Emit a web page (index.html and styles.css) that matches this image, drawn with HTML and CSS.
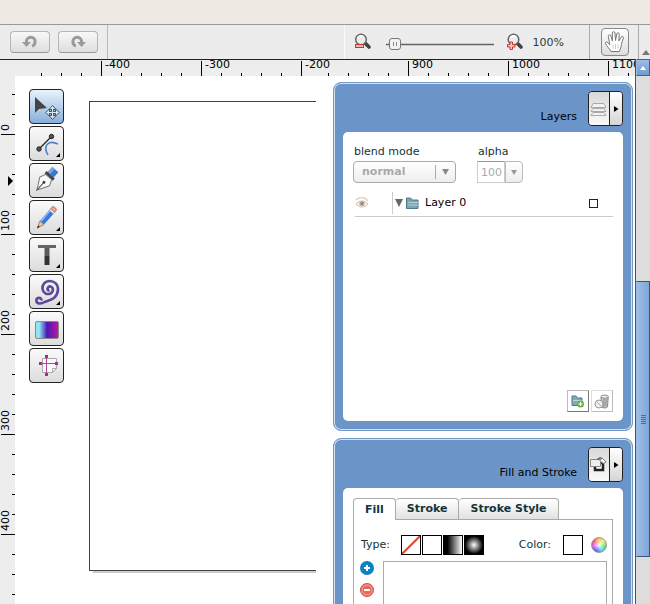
FILE: index.html
```html
<!DOCTYPE html>
<html lang="en">
<head>
<meta charset="utf-8">
<title>Vector editor</title>
<link rel="stylesheet" href="styles.css">
</head>
<body>
<div class="menubar"></div>
<header class="toolbar">
  <div class="history">
    <button class="history-btn" aria-label="Undo"><svg width="16" height="14" viewBox="0 0 16 14"><path d="M4.500 8V6.500a4.300 4.300 0 0 1 8.600 0c0 2.300-1 3.800-3 4.700" fill="none" stroke="#999" stroke-width="3"/><path d="M0 7h9l-4.500 5z" fill="#999"/></svg></button>
    <button class="history-btn" aria-label="Redo"><svg width="16" height="14" viewBox="0 0 16 14"><path d="M11.500 8V6.500a4.300 4.300 0 0 0-8.600 0c0 2.300 1 3.800 3 4.700" fill="none" stroke="#999" stroke-width="3"/><path d="M16 7H7l4.500 5z" fill="#999"/></svg></button>
  </div>
  <div class="zoom">
    <button class="plain" aria-label="Zoom out"><svg width="18" height="18" viewBox="0 0 18 18"><path d="M10 9l5 5" stroke="#444" stroke-width="3.600" stroke-linecap="round"/><circle cx="7" cy="6.500" r="5.300" fill="#e9edef" stroke="#666" stroke-width="1.500"/><path d="M4 5c1-2 4-3 5-1" fill="none" stroke="#fff" stroke-width="2"/><rect x="1.500" y="11.500" width="8" height="3" fill="#f6b5ac" stroke="#c8372d"/></svg></button>
    <input class="slider" type="range" min="0" max="100" value="4" aria-label="Zoom">
    <button class="plain" aria-label="Zoom in"><svg width="18" height="18" viewBox="0 0 18 18"><path d="M10 9l5 5" stroke="#444" stroke-width="3.600" stroke-linecap="round"/><circle cx="7.500" cy="6.500" r="5.300" fill="#e9edef" stroke="#666" stroke-width="1.500"/><path d="M4.500 5c1-2 4-3 5-1" fill="none" stroke="#fff" stroke-width="2"/><path d="M4 9h2.500v2.500H9V14H6.500v2.500H4V14H1.500v-2.500H4z" fill="#f6c3bb" stroke="#c8372d"/></svg></button>
    <span class="zoom-value">100%</span>
  </div>
  <div class="hand-group">
    <button class="hand" aria-label="Hand"><svg width="22" height="24" viewBox="0 0 22 24"><path d="M7 21.500c-1.500-3-4.500-5.500-5.500-8-.4-1.500 1.400-2 2.300-1l2 2.200L4.300 6.500c-.3-1.900 2-2.300 2.600-.5l1.500 5L8.300 3c0-1.800 2.500-1.800 2.700 0l.5 7.500 1.300-6.700c.4-1.600 2.500-1.300 2.400.4L14.800 11l2.400-4c.9-1.300 2.700-.4 2.200 1.200-.8 2.600-1.800 4-2 6.300-.2 2.700-1 4.500-2.200 7z" fill="#fff" stroke="#777"/><path d="M9 14.500v4M11.500 14v5M14 14.500v4" stroke="#ccc"/></svg></button>
  </div>
  <div class="toolbar-end"><svg width="8" height="5" viewBox="0 0 8 5"><path d="M4 0l4 5H0z" fill="#777"/></svg></div>
</header>

<div class="app">
  <div class="desk">
    <div class="ruler-top">
      <span class="cell lead"></span>
      <span class="cell major">-400</span>
      <span class="cell major">-300</span>
      <span class="cell major short">-200</span>
      <span class="cell medium"></span>
      <span class="cell major">900</span>
      <span class="cell major">1000</span>
      <span class="cell major">1100</span>
    </div>
    <main class="workspace">
      <div class="ruler-left">
        <span class="vcell vlead"><b>0</b></span>
        <span class="vcell vmajor"><svg class="marker" width="6" height="10" viewBox="0 0 6 10"><path d="M1 0l5 5-5 5z"/></svg><b>100</b></span>
        <span class="vcell vmajor"><b>200</b></span>
        <span class="vcell vmajor"><b>300</b></span>
        <span class="vcell vmajor"><b>400</b></span>
        <span class="vcell vmajor vlast"></span>
      </div>
      <nav class="tools" aria-label="Tools">
        <button class="tool active" aria-label="Select"><svg width="33" height="33" viewBox="0 0 33 33"><path d="M5 7v16l4-4 8-1z" fill="#444"/><path d="M22.500 17v12M16.500 22.500h12" stroke="#555" stroke-width="3"/><path d="M22.500 15.500l3.500 4h-7zM22.500 29.500l3.500-4h-7zM15.500 22.500l4-3.500v7zM29.500 22.500l-4-3.500v7z" fill="#dbe8f5" stroke="#555"/><path d="M22.500 18v9M18 22.500h9" stroke="#dbe8f5"/></svg></button>
        <button class="tool more" aria-label="Edit points"><svg width="33" height="33" viewBox="0 0 33 33"><path d="M18 28c-5-8-1-16 10-11" fill="none" stroke="#4b82cf" stroke-width="1.600"/><path d="M9 22L22 9" stroke="#222" stroke-width="1.300"/><circle cx="9" cy="22" r="2.200" fill="#555" stroke="#222"/><circle cx="21.500" cy="9.500" r="2.200" fill="#555" stroke="#222"/></svg></button>
        <button class="tool" aria-label="Pen"><svg width="33" height="33" viewBox="0 0 33 33"><g transform="rotate(42 16 16)"><path d="M12 2h8v7h-8z" fill="#3d78cf"/><path d="M12 2h3v7h-3z" fill="#7ba7e5"/><path d="M10.500 9h11v3h-11z" fill="#3b4654"/><path d="M12 12h8l2.500 6c-2 4-4.500 7-6.500 12-2-5-4.500-8-6.500-12z" fill="#fafaf8" stroke="#777"/><path d="M16 29v-10" stroke="#444"/><circle cx="16" cy="19" r="1.400" fill="#333"/></g></svg></button>
        <button class="tool more" aria-label="Pencil"><svg width="33" height="33" viewBox="0 0 33 33"><g transform="rotate(41 16 16)"><rect x="14" y="3" width="5.500" height="5" rx="2" fill="#f3a18e" stroke="#a65d50" stroke-width=".7"/><path d="M14 7h5.500v2H14z" fill="#eee" stroke="#777" stroke-width=".5"/><path d="M14 9h5.500v14H14z" fill="#3777db"/><path d="M14 9h1.800v14H14z" fill="#88b5f5"/><path d="M14 23h5.500L16.700 30z" fill="#e8c493" stroke="#76664c" stroke-width=".6"/><path d="M15.700 27.500h2l-1 3z" fill="#222"/></g></svg></button>
        <button class="tool more" aria-label="Text tool"><svg width="33" height="33" viewBox="0 0 33 33"><path d="M8 7h18v3H8z" fill="#666"/><path d="M14.500 10h5v8h-5z" fill="#5a5a5a"/><path d="M14.500 18h5v9h-5z" fill="#333"/></svg></button>
        <button class="tool more" aria-label="Spiral"><svg width="33" height="33" viewBox="0 0 33 33"><path d="M11.500 24.500C10 21.500 5.500 23 6.500 26.500C7.500 29.500 12 28.500 14.500 27C20 25 27 24 28 15C28 9 24 6 19.500 6C15 6 12 9.500 12.500 14C13 18 17 20 20.500 18.500C23.500 17 24 12.500 20.500 11.500C18 11 16.500 14 18.500 15.500" fill="none" stroke="#5c499b" stroke-width="2.600" stroke-linecap="round"/></svg></button>
        <button class="tool" aria-label="Gradient"><span class="gradient-chip"></span></button>
        <button class="tool" aria-label="Transform"><svg width="33" height="33" viewBox="0 0 33 33"><path d="M12.500 9.500h14v10l-4 4h-10z" fill="#fafafa" stroke="#aaa"/><path d="M26.500 19.500h-4v4" fill="none" stroke="#aaa"/><path d="M16.500 7v18M11 14.500h16" stroke="#b04a9c"/><path d="M15 6h3v3h-3zM15 24h3v3h-3zM9 13h3v3H9zM25 13h3v3h-3z" fill="#a0308c"/></svg></button>
      </nav>
      <div class="artboard"></div>
      <aside class="panels">
        <section class="panel layers">
          <div class="panel-head">
            <h2>Layers</h2>
            <div class="split">
              <button class="split-icon" aria-label="Layers panel"><svg width="20" height="33" viewBox="0 0 20 33"><path d="M4 11.500h11l2 4H2zM4 16.500h11l2 3H2zM4 20.500h11l2 3H2z" fill="#f1f1f1" stroke="#aaa"/></svg></button>
              <button class="split-arrow" aria-label="Collapse layers"><svg width="5" height="6" viewBox="0 0 5 6"><path d="M0 0l4.500 3L0 6z"/></svg></button>
            </div>
          </div>
          <div class="panel-body layers-body">
            <div class="fields">
              <div class="field field-blend">
                <label for="blend">blend mode</label>
                <div class="select-wrap">
                  <select id="blend"><option>normal</option></select>
                  <svg class="select-mark" width="16" height="14" viewBox="0 0 16 14"><path d="M.5 0v14" stroke="#aaa"/><path d="M7 4h7l-3.500 6z" fill="#888"/></svg>
                </div>
              </div>
              <div class="field">
                <label for="alpha">alpha</label>
                <div class="combo">
                  <input id="alpha" type="text" value="100">
                  <button aria-label="Alpha values"><svg width="6" height="5" viewBox="0 0 6 5"><path d="M0 0h6L3 5z" fill="#999"/></svg></button>
                </div>
              </div>
            </div>
            <div class="layer-row">
              <div class="eye"><svg width="14" height="12" viewBox="0 0 14 12"><path d="M1 3c4-4 9-3 12 1" fill="none" stroke="#edceb2" stroke-width="1.500"/><path d="M1 7c3-4 9-4 12 0-3 4-9 4-12 0z" fill="#f3eee8" stroke="#dfc0a2"/><circle cx="7" cy="6.500" r="2.600" fill="#9eb1ba"/><circle cx="7" cy="6.500" r="1" fill="#65757d"/></svg></div>
              <svg class="twisty" width="8" height="8" viewBox="0 0 8 8"><path d="M0 0h8L4 8z" fill="#666"/></svg>
              <svg width="13" height="12" viewBox="0 0 13 12"><path d="M.5 11.500V1h4l1.500 2h6v8.500z" fill="#7ba5b4" stroke="#4f7888"/><path d="M2 5.500h10M2 8h10" stroke="#b3d0d9"/></svg>
              <span class="layer-name">Layer 0</span>
              <span class="layer-color"></span>
            </div>
            <div class="layer-actions">
              <button aria-label="Add layer"><svg width="14" height="13" viewBox="0 0 14 13"><path d="M1 10.500V1h4l1.500 2H11v7.500z" fill="#83a9b5" stroke="#527888"/><path d="M2 5.500h9" stroke="#bfd8df"/><circle cx="9.500" cy="9" r="3.500" fill="#66b443"/><path d="M9.500 7v4M7.500 9h4" stroke="#fff" stroke-width="1.200"/></svg></button>
              <button class="faint" aria-label="Delete layer"><svg width="16" height="15" viewBox="0 0 16 15"><path d="M7 3l.5 10c2 1.500 5 1 6 0l.7-10z" fill="#c8c8c8" stroke="#888"/><path d="M10 5v8M12 5v7" stroke="#888"/><ellipse cx="10.600" cy="2.700" rx="3.700" ry="1.600" fill="#eee" stroke="#888"/><circle cx="5" cy="10" r="4" fill="#eee" stroke="#999"/><path d="M3 8l4 4" stroke="#aaa"/></svg></button>
            </div>
          </div>
        </section>
        <section class="panel fill">
          <div class="panel-head">
            <h2>Fill and Stroke</h2>
            <div class="split">
              <button class="split-icon" aria-label="Fill and stroke panel"><svg width="20" height="33" viewBox="0 0 20 33"><path d="M6 15h8v7H6z" fill="#fff" stroke="#222" stroke-width="2.500"/><path d="M1.500 11.500h10v7h-10z" fill="#eee" stroke="#888"/><path d="M8.500 12c1-3 5-3 5 1" fill="none" stroke="#555" stroke-width="1.300"/><path d="M13 10l4 4-3 1.500-3-3z" fill="#fff" stroke="#777"/></svg></button>
              <button class="split-arrow" aria-label="Collapse fill and stroke"><svg width="5" height="6" viewBox="0 0 5 6"><path d="M0 0l4.500 3L0 6z"/></svg></button>
            </div>
          </div>
          <div class="panel-body fill-body">
            <div class="tabs" role="tablist">
              <button class="tab selected" role="tab" aria-selected="true">Fill</button>
              <button class="tab" role="tab">Stroke</button>
              <button class="tab" role="tab">Stroke Style</button>
            </div>
            <div class="tab-page">
              <div class="type-row">
                <span class="type-label">Type:</span>
                <div class="swatches">
                  <button class="swatch" aria-label="No fill"><svg width="18" height="18" viewBox="0 0 18 18"><path d="M0 18L18 0" stroke="#d8482d" stroke-width="2"/></svg></button>
                  <button class="swatch" aria-label="Solid"></button>
                  <button class="swatch linear" aria-label="Linear gradient"></button>
                  <button class="swatch radial" aria-label="Radial gradient"></button>
                </div>
                <span class="color-label">Color:</span>
                <button class="swatch" aria-label="Fill color"></button>
                <button class="wheel" aria-label="Color wheel"></button>
              </div>
              <div class="stops">
                <div class="stop-buttons">
                  <button class="plain" aria-label="Add fill"><svg width="14" height="14" viewBox="0 0 14 14"><circle cx="7" cy="7" r="7" fill="#0c82c1"/><path d="M7 4v6M4 7h6" stroke="#fff" stroke-width="2"/></svg></button>
                  <button class="plain" aria-label="Remove fill"><svg width="14" height="14" viewBox="0 0 14 14"><circle cx="7" cy="7" r="6.500" fill="#e8685c" stroke="#d05247"/><circle cx="7" cy="7" r="5" fill="none" stroke="#f5aaa2"/><path d="M4 7h6" stroke="#fff" stroke-width="2"/></svg></button>
                </div>
                <div class="stop-list"></div>
              </div>
            </div>
          </div>
        </section>
      </aside>
    </main>
  </div>
  <div class="scrollbar">
    <button class="scroll-up" aria-label="Scroll up"><svg width="6" height="4" viewBox="0 0 6 4"><path d="M3 0l3 4H0z" fill="#fff"/></svg></button>
    <div class="scroll-thumb"><span class="grip"></span></div>
  </div>
</div>
</body>
</html>
```
FILE: styles.css
```css
* { box-sizing: border-box; }

body {
  margin: 0;
  height: 100vh;
  overflow: hidden;
  display: flex;
  flex-direction: column;
  background: #fff;
  color: #000;
  font: 11px/14px "DejaVu Sans", Verdana, sans-serif;
}

button {
  display: flex;
  align-items: center;
  justify-content: center;
  padding: 0;
  font: inherit;
  color: inherit;
}

svg { display: block; flex: none; }

.plain { border: 0; background: none; }

/* Top bars */
.menubar {
  flex: none;
  height: 25px;
  background: #eeeae3;
  border-bottom: 1px solid #999;
}

.toolbar {
  flex: none;
  display: flex;
  align-items: stretch;
  height: 34px;
  background: #ececec;
}

.history {
  display: flex;
  align-items: center;
  gap: 8px;
  padding: 0 9px 0 10px;
  border-right: 1px solid #bbb;
}

.history-btn {
  width: 40px;
  height: 22px;
  border: 1px solid #b5b5b5;
  border-bottom-color: #999;
  border-radius: 4px;
  background: linear-gradient(#f8f8f8, #dedede);
}

.zoom {
  display: flex;
  align-items: center;
  margin-left: auto;
  padding: 0 25px 0 9px;
  border-left: 1px solid #fafafa;
  color: #1f3f42;
}

.slider {
  appearance: none;
  width: 108px;
  height: 14px;
  margin: 4px 12px 0 14px;
  background: linear-gradient(#5c6668, #5c6668) center / 100% 1px no-repeat,
    linear-gradient(#c5caca, #c5caca) center / 100% 3px no-repeat;
}

.slider::-webkit-slider-thumb {
  appearance: none;
  width: 12px;
  height: 12px;
  border: 1px solid #777;
  border-radius: 3px;
  background: linear-gradient(90deg, transparent 3px, #888 3px 4px, transparent 4px 6px, #888 6px 7px, transparent 7px) center / 10px 4px no-repeat, #f3f3f3;
}

.zoom-value { margin: 2px 0 0 9px; }

.hand-group {
  display: flex;
  align-items: center;
  padding: 0 9px 0 11px;
  border-left: 1px solid #aaa;
}

.hand {
  width: 28px;
  height: 28px;
  border: 1px solid #888;
  border-radius: 4px;
  background: linear-gradient(#fff, #ddd);
}

.toolbar-end {
  display: flex;
  align-items: flex-end;
  width: 12px;
  padding: 0 0 4px 3px;
  border-left: 1px solid #aaa;
}

/* Work area */
.app { flex: 1; display: flex; min-height: 0; overflow: hidden; }

.desk {
  flex: 1;
  min-width: 0;
  display: flex;
  flex-direction: column;
  border-top: 1px solid #222;
}

.ruler-top {
  flex: none;
  display: flex;
  height: 16px;
  padding-left: 41px;
  overflow-x: clip;
  background: #ededed;
}

.cell {
  position: relative;
  flex: none;
  width: 100px;
  padding-left: 4px;
  line-height: 10px;
  background: linear-gradient(90deg, #000 1px, transparent 1px) left bottom / 20px 3px repeat-x;
}

.cell.lead { width: 60px; }
.cell.medium { width: 80px; }
.cell.short { width: 27px; background-repeat: no-repeat; }

.major::before {
  content: "";
  position: absolute;
  left: 0;
  top: 1px;
  bottom: 0;
  width: 1px;
  background: #000;
}

.workspace { flex: 1; display: flex; min-height: 0; }

.ruler-left {
  flex: none;
  width: 15px;
  padding-top: 18px;
  background: #ededed;
}

.vcell {
  position: relative;
  display: flex;
  align-items: flex-end;
  height: 100px;
  padding-bottom: 3px;
  background: linear-gradient(#000 1px, transparent 1px) right top / 3px 20px repeat-y;
}

.vcell.vlead { height: 40px; }
.vcell.vlast { height: 70px; }

.vcell b {
  font-weight: normal;
  line-height: 11px;
  writing-mode: vertical-rl;
  transform: rotate(180deg);
}

.vmajor::before {
  content: "";
  position: absolute;
  left: 1px;
  right: 0;
  top: 0;
  height: 1px;
  background: #000;
}

.marker { position: absolute; left: 7px; top: 42px; }

.tools {
  flex: none;
  display: flex;
  flex-direction: column;
  gap: 2px;
  margin: 13px 25px 0 14px;
}

.tool {
  position: relative;
  width: 35px;
  height: 35px;
  border: 1px solid #222;
  border-radius: 4px;
  background: linear-gradient(#fafafa, #dcdcdc);
}

.tool.active { background: linear-gradient(#eaf2fb, #88b0da); }

.tool.more::after {
  content: "";
  position: absolute;
  right: 3px;
  bottom: 3px;
  border-left: 4px solid transparent;
  border-bottom: 4px solid #000;
}

.gradient-chip {
  width: 24px;
  height: 18px;
  margin-top: 2px;
  border: 1px solid #888;
  border-radius: 2px;
  background: linear-gradient(90deg, #8fe5f0 15%, #4a18b8 50%, #b81a9c);
}

.artboard {
  position: relative;
  flex: 1;
  height: 470px;
  margin-top: 25px;
  border: 1px solid #444;
  border-right: 0;
}

.artboard::after {
  content: "";
  position: absolute;
  left: 3px;
  right: 0;
  top: 100%;
  height: 2px;
  margin-top: 1px;
  background: #ccc;
}

/* Panels */
.panels {
  flex: none;
  display: flex;
  flex-direction: column;
  gap: 7px;
  width: 300px;
  margin: 6px 2px 0 17px;
}

.panel {
  flex: none;
  padding: 0 9px 9px;
  border: 1px solid #7399c6;
  border-radius: 8px;
  background: #6b95c9;
  box-shadow: inset 0 0 0 1px #d5e2f2;
}

.panel-head {
  display: flex;
  align-items: center;
  justify-content: flex-end;
  gap: 11px;
  height: 49px;
  padding-top: 2px;
}

.panel-head h2 {
  margin: 17px 0 0;
  font-size: 11px;
  font-weight: normal;
}

.split {
  display: flex;
  width: 35px;
  height: 35px;
  overflow: hidden;
  border: 1px solid #222;
  border-radius: 4px;
}

.split-icon {
  width: 21px;
  border: 0;
  border-right: 1px solid #222;
  background: linear-gradient(#d8d8d8, #fafafa);
}

.split-arrow {
  flex: 1;
  border: 0;
  background: linear-gradient(#fff, #d5d5d5);
}

.panel-body {
  display: flex;
  flex-direction: column;
  border-radius: 5px;
  background: #fff;
}

.layers-body { min-height: 289px; padding: 13px 10px 9px; }

.fields { display: flex; gap: 21px; color: #12343a; }

.field label { display: block; margin: 0 0 2px 1px; }

.select-wrap { position: relative; width: 103px; }

.select-wrap select {
  appearance: none;
  display: block;
  width: 100%;
  height: 22px;
  padding: 0 24px 0 8px;
  border: 1px solid #aaa;
  border-radius: 4px;
  background: linear-gradient(#fff, #eee);
  color: #aaa;
  font: bold 11px/14px "DejaVu Sans", Verdana, sans-serif;
}

.select-mark {
  position: absolute;
  right: 5px;
  top: 4px;
  pointer-events: none;
}

.combo { display: flex; }

.combo input {
  width: 28px;
  height: 22px;
  padding: 0 0 0 3px;
  border: 1px solid #ccc;
  border-top-color: #999;
  background: #fff;
  color: #aaa;
  font: 11px/14px "DejaVu Sans", Verdana, sans-serif;
}

.combo button {
  width: 18px;
  height: 22px;
  border: 1px solid #bbb;
  border-radius: 0 4px 4px 0;
  background: linear-gradient(#fff, #eee);
}

.layer-row {
  display: flex;
  align-items: center;
  height: 26px;
  margin: 8px 0 0 2px;
  padding-bottom: 2px;
  border-bottom: 1px solid #ccc;
}

.eye {
  width: 38px;
  height: 22px;
  padding-top: 5px;
  border-right: 1px solid #ccc;
}

.twisty { margin: 0 3px 0 2px; }
.layer-name { margin-left: 6px; }

.layer-color {
  width: 9px;
  height: 9px;
  margin: 2px 15px 0 auto;
  border: 1px solid #222;
}

.layer-actions {
  display: flex;
  justify-content: flex-end;
  gap: 2px;
  margin-top: auto;
}

.layer-actions button {
  width: 22px;
  height: 22px;
  border: 1px solid #bbb;
  border-right-color: #777;
  border-bottom-color: #777;
  background: #fff;
}

.layer-actions .faint { border-color: #ddd #bbb #bbb #ddd; }

/* Fill and stroke */
.fill-body { padding: 10px; }

.tabs { display: flex; align-items: flex-end; }

.tab {
  height: 21px;
  padding: 0 11px;
  border: 1px solid #aaa;
  border-bottom: 0;
  border-left-width: 0;
  border-radius: 4px 4px 0 0;
  background: linear-gradient(#fff, #e2e2e2);
  color: #12343a;
  font-weight: bold;
}

.tab.selected {
  position: relative;
  height: 22px;
  margin-bottom: -1px;
  border-left-width: 1px;
  background: #fff;
  z-index: 1;
}

.tab-page {
  min-height: 180px;
  padding: 15px 5px 8px 7px;
  border: 1px solid #aaa;
}

.type-row { display: flex; align-items: center; color: #12343a; }
.type-label { width: 40px; }
.swatches { display: flex; gap: 1px; }

.swatch {
  width: 20px;
  height: 20px;
  border: 1px solid #000;
  background: #fff;
}

.swatch.linear { background: linear-gradient(90deg, #000 20%, #fff); }
.swatch.radial { background: radial-gradient(circle, #fff, #000 70%); }
.color-label { margin: 0 12px 0 auto; }

.wheel {
  width: 16px;
  height: 16px;
  margin-left: 8px;
  border: 1px solid #999;
  border-radius: 50%;
  background: radial-gradient(circle, #fff, transparent 70%),
    conic-gradient(#fb5, #ee4, #4d5, #4ce, #45f, #d4f, #f45, #fb5);
}

.stops { display: flex; gap: 9px; margin-top: 6px; }

.stop-buttons {
  display: flex;
  flex-direction: column;
  gap: 8px;
  margin-left: -1px;
}

.stop-list { flex: 1; height: 120px; border: 1px solid #aaa; }

/* Scroll bar */
.scrollbar {
  flex: none;
  width: 15px;
  border-left: 1px solid #36587f;
  background: #ddd;
}

.scroll-up {
  width: 100%;
  height: 17px;
  border: 1px solid #3f6594;
  border-left-color: #9bbce2;
  background: linear-gradient(#9dbde6, #6f9bd2);
}

.scroll-thumb {
  display: flex;
  align-items: center;
  justify-content: center;
  height: 276px;
  margin-top: 205px;
  border: 1px solid #36587f;
  border-left-color: #9bbce2;
  background: linear-gradient(90deg, #9dbde8, #7fa5d8);
}

.grip {
  width: 5px;
  height: 9px;
  background: repeating-linear-gradient(#456f9f 0 1px, transparent 1px 2px);
}
```
